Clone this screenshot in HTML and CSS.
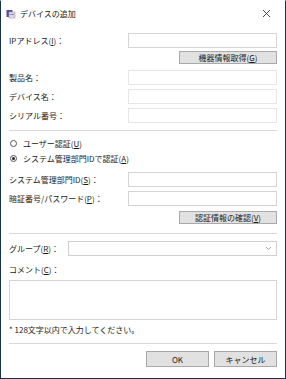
FILE: index.html
```html
<!DOCTYPE html>
<html lang="ja">
<head>
<meta charset="utf-8">
<link rel="stylesheet" href="styles.css">
</head>
<body>
<div class="window">
  <div class="titlebar">
    <svg class="app-icon" width="10" height="10" viewBox="0 0 10 10">
      <rect x="0.5" y="1" width="6" height="7" fill="#5b4a9e"/>
      <rect x="3" y="3" width="6" height="6" fill="#d9d9e6" stroke="#9a9ab0" stroke-width="0.6"/>
      <rect x="4" y="5" width="4" height="1" fill="#8a8aa0"/>
    </svg>
    <span class="title">デバイスの追加</span>
    <svg class="close" width="9" height="9" viewBox="0 0 9 9">
      <path d="M1 1 L8 8 M8 1 L1 8" stroke="#333" stroke-width="0.9" fill="none"/>
    </svg>
  </div>
  <div class="content">
    <div class="row r-ip">
      <span class="label">IPアドレス(<u>I</u>)：</span>
      <div class="input"></div>
    </div>
    <div class="btn-row r-get">
      <div class="btn btn-small">機器情報取得(<u>G</u>)</div>
    </div>
    <div class="row r-prod">
      <span class="label">製品名：</span>
      <div class="input disabled"></div>
    </div>
    <div class="row r-gap">
      <span class="label">デバイス名：</span>
      <div class="input disabled"></div>
    </div>
    <div class="row r-gap">
      <span class="label">シリアル番号：</span>
      <div class="input disabled"></div>
    </div>
    <div class="sep s1"></div>
    <div class="radio r-rad1"><span class="dot"></span>ユーザー認証(<u>U</u>)</div>
    <div class="radio"><span class="dot on"></span>システム管理部門IDで認証(<u>A</u>)</div>
    <div class="row r-sys">
      <span class="label">システム管理部門ID(<u>S</u>)：</span>
      <div class="input"></div>
    </div>
    <div class="row r-gap">
      <span class="label">暗証番号/パスワード(<u>P</u>)：</span>
      <div class="input"></div>
    </div>
    <div class="btn-row r-chk">
      <div class="btn btn-small">認証情報の確認(<u>V</u>)</div>
    </div>
    <div class="sep s2"></div>
    <div class="row r-grp">
      <span class="label short">グループ(<u>R</u>)：</span>
      <div class="input combo"><svg width="7" height="5" viewBox="0 0 7 5"><path d="M1 1 L3.5 3.5 L6 1" stroke="#9a9a9a" stroke-width="0.9" fill="none"/></svg></div>
    </div>
    <div class="plain r-cmt">コメント(<u>C</u>)：</div>
    <div class="textarea"></div>
    <div class="plain r-note">* 128文字以内で入力してください。</div>
    <div class="sep s3"></div>
    <div class="footer">
      <div class="btn btn-main">OK</div>
      <div class="btn btn-main">キャンセル</div>
    </div>
  </div>
</div>
</body>
</html>
```

FILE: styles.css
```css
* { box-sizing: border-box; }
html, body { margin: 0; padding: 0; background: #ffffff; }
body {
  font-family: "Noto Sans CJK JP", "Noto Sans", sans-serif;
  font-size: 8px;
  color: #1a1a1a;
}
u { text-decoration: underline; text-underline-offset: 1px; }
.window {
  width: 286px;
  height: 379px;
  border: 1px solid #17324f;
  border-top-color: #ffffff;
  background: #ffffff;
  display: flex;
  flex-direction: column;
}
.titlebar {
  height: 25px;
  display: flex;
  align-items: center;
  padding: 0 0 0 5px;
  flex-shrink: 0;
}
.app-icon { margin-right: 4px; }
.title { font-size: 8px; color: #222; flex: 1; }
.close { margin-right: 14px; }
.content {
  padding: 0 8px 0 8px;
  display: flex;
  flex-direction: column;
}
.row {
  display: flex;
  align-items: center;
  height: 15px;
}
.label { width: 119px; flex-shrink: 0; line-height: 15px; white-space: nowrap; }
.label.short { width: 59px; }
.input {
  flex: 1;
  height: 15px;
  border: 1px solid #d4d4d4;
  background: #fff;
}
.input.disabled { border-color: #e6e6e6; }
.combo {
  display: flex;
  align-items: center;
  justify-content: flex-end;
  padding-right: 4px;
  border-color: #cfcfcf;
}
.btn-row { display: flex; justify-content: flex-end; }
.btn {
  background: #e1e1e1;
  border: 1px solid #a9a9a9;
  display: flex;
  align-items: center;
  justify-content: center;
  color: #1a1a1a;
  white-space: nowrap;
}
.btn-small { width: 98px; height: 13px; line-height: 11px; }
.btn-main { width: 63px; height: 16px; }
.r-ip { margin-top: 7px; }
.r-get { margin-top: 3px; }
.r-prod { margin-top: 6px; }
.r-gap { margin-top: 4px; }
.sep { height: 1px; background: #d8d8d8; }
.s1 { margin-top: 7px; }
.radio {
  height: 15px;
  display: flex;
  align-items: center;
  padding-left: 1px;
}
.r-rad1 { margin-top: 5px; }
.dot {
  width: 7px;
  height: 7px;
  border: 1px solid #555;
  border-radius: 50%;
  margin-right: 6px;
  position: relative;
  background: #fff;
}
.dot.on::after {
  content: "";
  position: absolute;
  left: 1px;
  top: 1px;
  width: 3px;
  height: 3px;
  border-radius: 50%;
  background: #222;
}
.r-sys { margin-top: 6px; }
.r-chk { margin-top: 5px; }
.s2 { margin-top: 9px; }
.r-grp { margin-top: 7px; }
.plain { height: 12px; line-height: 12px; }
.r-cmt { margin-top: 8px; }
.textarea {
  margin-top: 4px;
  height: 40px;
  border: 1px solid #d4d4d4;
}
.r-note { margin-top: 4px; }
.s3 { margin-top: 7px; }
.footer {
  margin-top: 7px;
  display: flex;
  justify-content: flex-end;
  gap: 5px;
}
```
